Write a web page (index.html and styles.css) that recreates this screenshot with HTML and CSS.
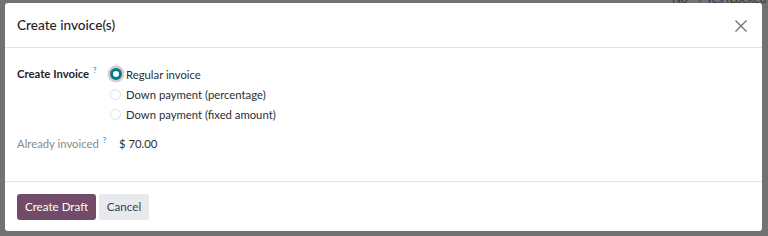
FILE: index.html
```html
<!DOCTYPE html>
<html>
<head>
<meta charset="utf-8">
<link rel="stylesheet" href="styles.css">
</head>
<body>
<div class="backdrop">
  <div class="bg-text bg-top">No <span class="arrow">→</span> <span class="yes">Yes</span> (Locked</div>
  <div class="modal">
    <div class="modal-header">
      <h4 class="title">Create invoice(s)</h4>
      <button class="close" aria-label="Close">
        <svg width="14" height="14" viewBox="0 0 14 14"><path d="M1.5 1.5 L12.5 12.5 M12.5 1.5 L1.5 12.5" stroke="#6f6f6f" stroke-width="1.3" fill="none"/></svg>
      </button>
    </div>
    <div class="modal-body">
      <div class="row">
        <div class="label strong">Create Invoice <sup class="help">?</sup></div>
        <div class="value">
          <label class="radio"><span class="dot checked"></span>Regular invoice</label>
          <label class="radio"><span class="dot"></span>Down payment (percentage)</label>
          <label class="radio"><span class="dot"></span>Down payment (fixed amount)</label>
        </div>
      </div>
      <div class="row row-invoiced">
        <div class="label muted">Already invoiced <sup class="help">?</sup></div>
        <div class="value amount">$ 70.00</div>
      </div>
    </div>
    <div class="modal-footer">
      <button class="btn btn-primary">Create Draft</button>
      <button class="btn btn-secondary">Cancel</button>
    </div>
  </div>
</div>
</body>
</html>
```

FILE: styles.css
```css
html, body {
  margin: 0;
  padding: 0;
}
body {
  background: #727272;
  font-family: "Lato", "Noto Sans", sans-serif;
  font-size: 11.3px;
  color: #212529;
  width: 768px;
  height: 236px;
  overflow: hidden;
}
.backdrop {
  position: relative;
  padding: 3px 6px 0 5px;
}
.bg-text {
  position: absolute;
  color: #3a3a3a;
  font-size: 12px;
  white-space: nowrap;
}
.bg-top {
  top: -9px;
  left: 672px;
}
.bg-top .yes { color: #1d3c66; }
.modal {
  position: relative;
  background: #fff;
  border-radius: 3px;
  height: 228px;
  display: flex;
  flex-direction: column;
}
.modal-header {
  height: 45px;
  border-bottom: 1px solid #dee2e6;
  display: flex;
  align-items: center;
  justify-content: space-between;
  padding: 0 11px 0 12px;
  box-sizing: border-box;
}
.title {
  margin: 0;
  font-size: 13.6px;
  font-weight: 500;
  color: #1f2328;
}
.close {
  background: none;
  border: 0;
  padding: 0;
  width: 20px;
  height: 20px;
  display: flex;
  align-items: center;
  justify-content: center;
  margin-top: 1px;
}
.modal-body {
  flex: 1;
  padding: 16px 12px 0 12px;
  border-bottom: 1px solid #dee2e6;
}
.row {
  display: flex;
}
.label {
  width: 88px;
  flex: none;
  line-height: 20px;
  white-space: nowrap;
}
.strong {
  font-weight: 700;
  color: #1f2328;
}
.muted {
  color: #84898f;
}
.help {
  color: #3c9fc4;
  font-size: 7.5px;
  font-weight: 700;
  vertical-align: top;
  line-height: 14px;
  margin-left: 1px;
}
.value {
  display: flex;
  flex-direction: column;
}
.radio {
  display: flex;
  align-items: center;
  height: 20px;
  color: #2b2f33;
  white-space: nowrap;
}
.dot {
  width: 11px;
  height: 11px;
  border-radius: 50%;
  border: 1px solid #dfe2e6;
  box-sizing: border-box;
  margin: 0 5px 0 5px;
  flex: none;
}
.dot.checked {
  width: 12px;
  height: 12px;
  border: 3.5px solid #017e84;
  background: #fff;
  box-shadow: 0 0 0 2.5px #dcc9d6;
  margin-left: 5px;
  margin-right: 4px;
}
.row-invoiced {
  margin-top: 10px;
}
.amount {
  line-height: 20px;
  margin-left: 14px;
  color: #2b2f33;
}
.modal-footer {
  height: 49px;
  display: flex;
  align-items: center;
  padding: 0 12px;
  gap: 3px;
  box-sizing: border-box;
}
.btn {
  font-family: inherit;
  font-size: 11.6px;
  height: 26px;
  border-radius: 3px;
  border: 0;
  padding: 0;
  white-space: nowrap;
}
.btn-primary {
  background: #714b67;
  color: #fff;
  width: 79px;
}
.btn-secondary {
  background: #e7e9ed;
  color: #374151;
  width: 50px;
}
```
